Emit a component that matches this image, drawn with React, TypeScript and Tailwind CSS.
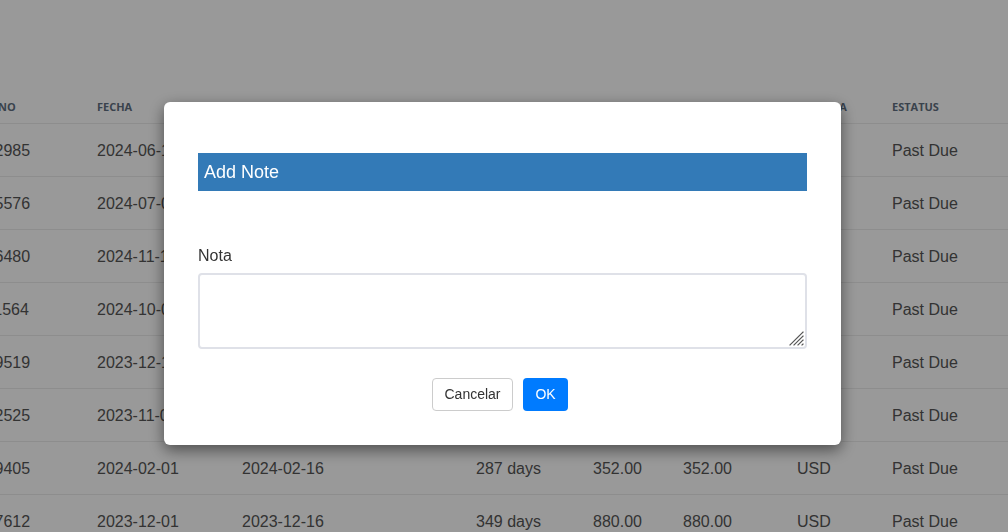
import { useState } from "react";

const rows = [
  { no: "100012985", fecha: "2024-06-15", vence: "2024-06-30", dias: "160 days", monto: "415.00", saldo: "415.00" },
  { no: "100015576", fecha: "2024-07-01", vence: "2024-07-16", dias: "144 days", monto: "220.00", saldo: "220.00" },
  { no: "100016480", fecha: "2024-11-15", vence: "2024-11-30", dias: "12 days", monto: "96.00", saldo: "96.00" },
  { no: "100011564", fecha: "2024-10-01", vence: "2024-10-16", dias: "57 days", monto: "310.00", saldo: "310.00" },
  { no: "100019519", fecha: "2023-12-15", vence: "2023-12-30", dias: "335 days", monto: "540.00", saldo: "540.00" },
  { no: "100012525", fecha: "2023-11-01", vence: "2023-11-16", dias: "379 days", monto: "125.00", saldo: "125.00" },
  { no: "100019405", fecha: "2024-02-01", vence: "2024-02-16", dias: "287 days", monto: "352.00", saldo: "352.00" },
  { no: "100017612", fecha: "2023-12-01", vence: "2023-12-16", dias: "349 days", monto: "880.00", saldo: "880.00" },
];

const cols = ["w-[147px]", "w-[145px]", "w-[234px]", "w-[117px]", "w-[90px]", "w-[114px]", "w-[95px]", "w-[140px]"];
const headers = ["FACTURA NO", "FECHA", "VENCE", "DIAS", "MONTO", "SALDO", "MONEDA", "ESTATUS"];

function InvoiceTable() {
  return (
    <div className="overflow-hidden pt-[90px]">
      <div className="-ml-[50px] w-[1082px]">
        <div className="flex h-[34px] items-center border-b border-[#ececec] pt-[1px] font-['Open_Sans',sans-serif] text-[11px] font-bold text-[#5f6f80]">
          <div className="-ml-[5px] w-[152px]">{headers[0]}</div>
          {headers.slice(1).map((h, i) => (
            <div key={h} className={cols[i + 1]}>{h}</div>
          ))}
        </div>
        {rows.map((r) => (
          <div key={r.no} className="flex h-[53px] items-center border-b border-[#ececec] pt-[1px] font-['Liberation_Sans',Arial,sans-serif] text-[16px] text-[#555]">
            <div className={cols[0]}>{r.no}</div>
            <div className={cols[1]}>{r.fecha}</div>
            <div className={cols[2]}>{r.vence}</div>
            <div className={cols[3]}>{r.dias}</div>
            <div className={cols[4]}>{r.monto}</div>
            <div className={cols[5]}>{r.saldo}</div>
            <div className={cols[6]}>USD</div>
            <div className={cols[7]}>Past Due</div>
          </div>
        ))}
      </div>
    </div>
  );
}

function ResizeGrip() {
  return (
    <svg width="16" height="16" viewBox="0 0 16 16" className="pointer-events-none absolute bottom-[3px] right-[3px]">
      <g stroke="#555" strokeWidth="1.2" strokeLinecap="square">
        <line x1="15" y1="2" x2="2" y2="15" />
        <line x1="15" y1="6" x2="6" y2="15" />
        <line x1="15" y1="10" x2="10" y2="15" />
        <line x1="15" y1="14" x2="14" y2="15" />
      </g>
    </svg>
  );
}

function NoteModal() {
  const [nota, setNota] = useState("");
  return (
    <div className="fixed inset-0 bg-black/40">
      <div className="ml-[164px] mt-[102px] w-[677px] rounded-[6px] bg-white px-[34px] pb-[34px] pt-[51px] font-['Liberation_Sans',Arial,sans-serif] shadow-[0_5px_15px_rgba(0,0,0,0.5)]">
        <div className="flex h-[38px] items-center bg-[#337ab7] px-[6px] text-[18px] text-white">Add Note</div>
        <div className="mt-[56px] text-[16px] leading-[18px] text-[#333]">Nota</div>
        <div className="relative mt-[8px]">
          <textarea
            value={nota}
            onChange={(e) => setNota(e.target.value)}
            className="block h-[76px] w-full resize-none rounded-[4px] border-2 border-[#dfe1e8] px-2 py-1 text-[14px] outline-none"
          />
          <ResizeGrip />
        </div>
        <div className="mt-[29px] flex justify-center gap-[10px] pr-[5px]">
          <button className="h-[33px] w-[81px] rounded-[4px] border border-[#ccc] bg-white text-[14px] text-[#333]">Cancelar</button>
          <button className="h-[33px] w-[45px] rounded-[4px] bg-[#007bff] text-[14px] text-white">OK</button>
        </div>
      </div>
    </div>
  );
}

export default function App() {
  return (
    <div className="relative h-[532px] w-[1008px] overflow-hidden bg-white">
      <InvoiceTable />
      <NoteModal />
    </div>
  );
}
